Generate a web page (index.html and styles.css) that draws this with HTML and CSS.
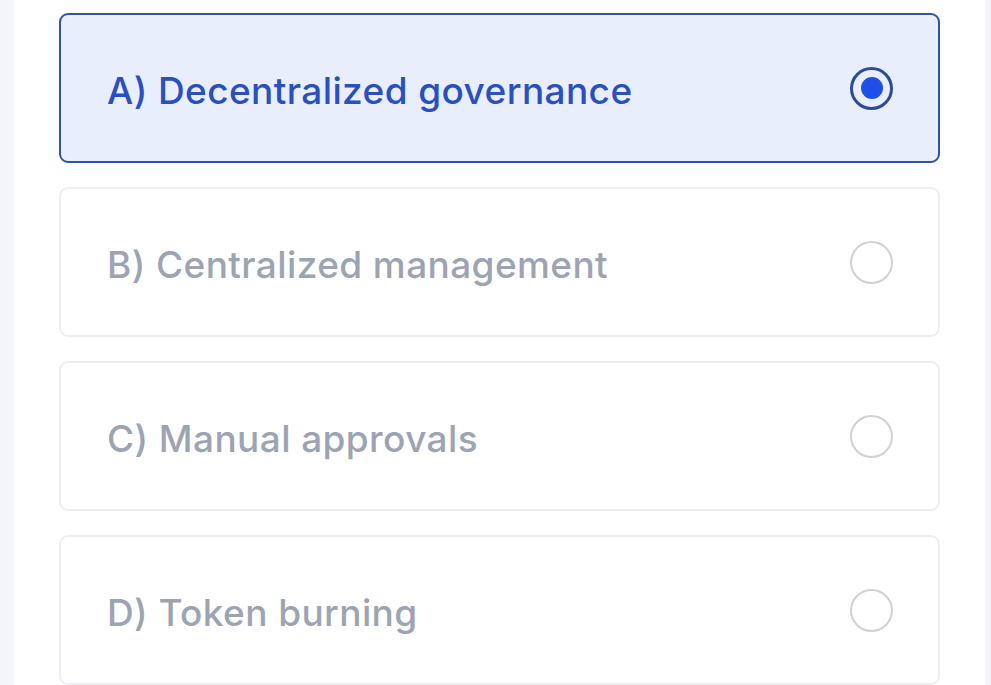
FILE: index.html
```html
<!DOCTYPE html>
<html lang="en">
<head>
<meta charset="utf-8">
<link rel="stylesheet" href="styles.css">
</head>
<body>
<div class="panel">
  <div class="option selected">
    <span class="label">A) Decentralized governance</span>
    <span class="radio"><span class="dot"></span></span>
  </div>
  <div class="option">
    <span class="label">B) Centralized management</span>
    <span class="radio"></span>
  </div>
  <div class="option">
    <span class="label">C) Manual approvals</span>
    <span class="radio"></span>
  </div>
  <div class="option">
    <span class="label">D) Token burning</span>
    <span class="radio"></span>
  </div>
</div>
</body>
</html>
```
FILE: styles.css
```css
html, body {
  margin: 0;
  padding: 0;
  background: #f4f5f9;
  height: 100%;
}
body {
  font-family: "Inter", "Noto Sans", sans-serif;
}
.panel {
  margin: 0 6px 0 14px;
  background: #ffffff;
  min-height: 100%;
  padding: 13px 45px 0 45px;
  box-sizing: border-box;
  display: flex;
  flex-direction: column;
  gap: 24px;
}
.option {
  height: 150px;
  box-sizing: border-box;
  border: 2px solid #eceef2;
  border-radius: 9px;
  display: flex;
  align-items: center;
  justify-content: space-between;
  padding: 0 45px 0 46px;
  background: #ffffff;
}
.option.selected {
  background: #e8eefc;
  border-color: #2f54a6;
}
.label {
  font-size: 37px;
  font-weight: 500;
  color: #9ca4b4;
  letter-spacing: 0.4px;
  padding-top: 5px;
}
.selected .label {
  color: #2a4fbf;
}
.radio {
  width: 43px;
  height: 43px;
  box-sizing: border-box;
  border: 2px solid #cfd1d6;
  border-radius: 50%;
  display: flex;
  align-items: center;
  justify-content: center;
}
.selected .radio {
  border: 3px solid #2c4c98;
}
.dot {
  width: 22px;
  height: 22px;
  border-radius: 50%;
  background: #1f4fe6;
}
```
